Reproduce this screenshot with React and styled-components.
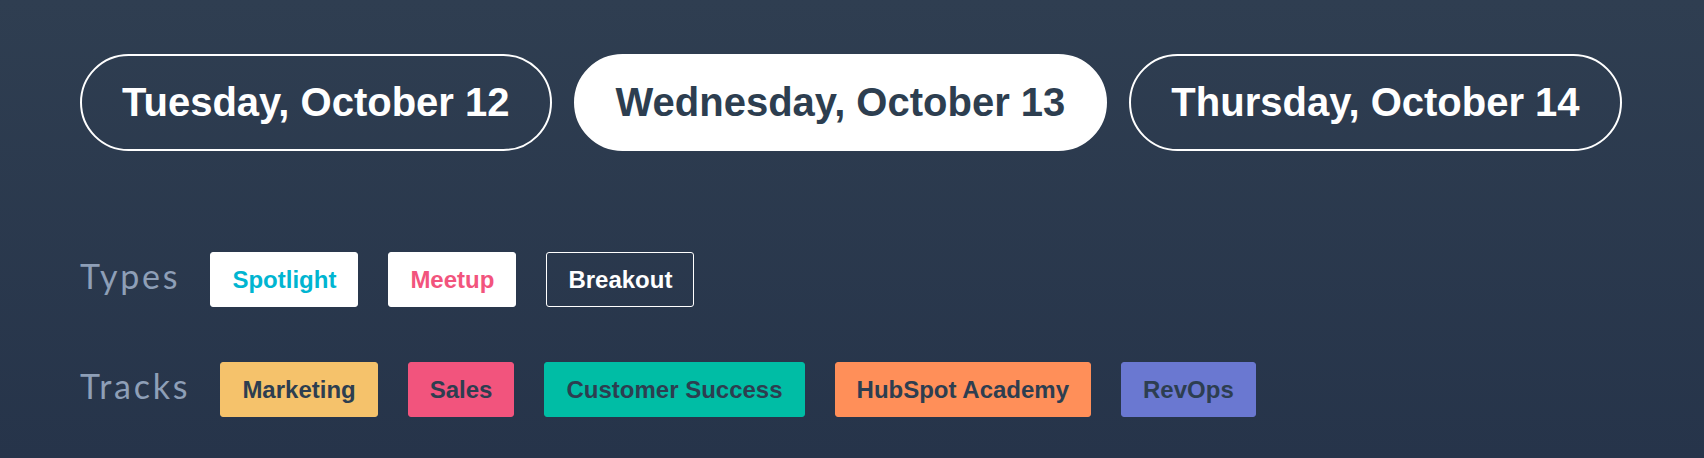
import React, { useState } from "react";
import styled, { createGlobalStyle } from "styled-components";

const GlobalStyle = createGlobalStyle`
  html, body {
    margin: 0;
    padding: 0;
  }
  body {
    font-family: "Liberation Sans", Arial, sans-serif;
  }
`;

const days = [
  "Tuesday, October 12",
  "Wednesday, October 13",
  "Thursday, October 14",
];

const types = [
  { label: "Spotlight", color: "#00b5d1", bg: "#ffffff" },
  { label: "Meetup", color: "#f2547d", bg: "#ffffff" },
  { label: "Breakout", color: "#ffffff", bg: "transparent", outline: true },
];

const tracks = [
  { label: "Marketing", bg: "#f5c26b" },
  { label: "Sales", bg: "#f2547d" },
  { label: "Customer Success", bg: "#00bda5" },
  { label: "HubSpot Academy", bg: "#ff8f59" },
  { label: "RevOps", bg: "#6a78d1" },
];

export default function App() {
  const [active, setActive] = useState(1);

  return (
    <Page>
      <GlobalStyle />
      <DayTabs>
        {days.map((d, i) => (
          <DayPill key={d} $active={i === active} onClick={() => setActive(i)}>
            {d}
          </DayPill>
        ))}
      </DayTabs>

      <Filters>
        <FilterRow>
          <FilterLabel>Types</FilterLabel>
          <ChipList>
            {types.map((t) => (
              <Chip
                key={t.label}
                $bg={t.bg}
                $color={t.color}
                $outline={t.outline}
              >
                {t.label}
              </Chip>
            ))}
          </ChipList>
        </FilterRow>
        <FilterRow>
          <FilterLabel>Tracks</FilterLabel>
          <ChipList>
            {tracks.map((t) => (
              <Chip key={t.label} $bg={t.bg} $color="#2d3e50">
                {t.label}
              </Chip>
            ))}
          </ChipList>
        </FilterRow>
      </Filters>
    </Page>
  );
}

const Page = styled.div`
  box-sizing: border-box;
  width: 100%;
  min-height: 458px;
  padding: 54px 80px 0 80px;
  background: linear-gradient(180deg, #2f3e51 0%, #26344a 100%);
`;

const DayTabs = styled.div`
  display: flex;
  gap: 22px;
`;

const DayPill = styled.button`
  box-sizing: border-box;
  height: 97px;
  padding: 0 40px;
  display: flex;
  align-items: center;
  justify-content: center;
  border-radius: 999px;
  border: 2px solid #ffffff;
  background: ${(p) => (p.$active ? "#ffffff" : "transparent")};
  color: ${(p) => (p.$active ? "#2d3e50" : "#ffffff")};
  font-family: "Liberation Sans", Arial, sans-serif;
  font-weight: 700;
  font-size: 40px;
  white-space: nowrap;
  cursor: pointer;
`;

const Filters = styled.div`
  margin-top: 101px;
  display: flex;
  flex-direction: column;
  gap: 55px;
`;

const FilterRow = styled.div`
  display: flex;
  align-items: center;
  gap: 30px;
`;

const FilterLabel = styled.span`
  font-family: Lato, "Open Sans", sans-serif;
  font-weight: 400;
  font-size: 34px;
  letter-spacing: 2.8px;
  color: #8e9fb7;
  margin-top: -8px;
`;

const ChipList = styled.div`
  display: flex;
  gap: 30px;
`;

const Chip = styled.span`
  box-sizing: border-box;
  height: 55px;
  padding: 0 21px;
  display: inline-flex;
  align-items: center;
  border-radius: 3px;
  border: 1.5px solid ${(p) => (p.$outline ? "#ffffff" : p.$bg)};
  background: ${(p) => p.$bg};
  color: ${(p) => p.$color};
  font-family: "Liberation Sans", Arial, sans-serif;
  font-weight: 700;
  font-size: 24px;
  white-space: nowrap;
`;
